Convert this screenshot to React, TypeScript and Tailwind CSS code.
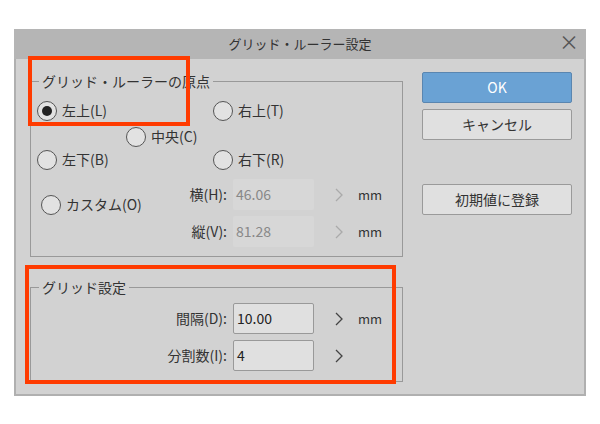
const F = { fontFamily: '"Noto Sans CJK JP","Noto Sans",sans-serif' };

function Radio({ on, label }: { on?: boolean; label: string }) {
  return (
    <div className="flex items-center gap-[5px]">
      <div className="w-[20px] h-[20px] rounded-full border border-[#555] bg-[#e2e2e2] flex items-center justify-center">
        {on && <div className="w-[10px] h-[10px] rounded-full bg-[#222]" />}
      </div>
      <span className="text-[14px] text-[#333]">{label}</span>
    </div>
  );
}

function Chev({ c }: { c: string }) {
  return (
    <svg width="10" height="16" viewBox="0 0 10 16" className="ml-[20px] mr-[14px]">
      <path d="M2 2 L8 8 L2 14" fill="none" stroke={c} strokeWidth="1.3" />
    </svg>
  );
}

function Row({ label, value, disabled, unit }: { label: string; value: string; disabled?: boolean; unit?: boolean }) {
  return (
    <div className="flex items-center h-[31px]">
      <span className="w-[197px] text-right pr-[6px] text-[14px] text-[#333]">{label}</span>
      <div className={`w-[81px] h-[31px] flex items-center px-[3px] text-[14px] rounded-[2px] ${disabled ? 'bg-[#d7d7d7] text-[#888]' : 'bg-[#e0e0e0] border border-[#999] text-[#222]'}`}>{value}</div>
      <Chev c={disabled ? '#aaa' : '#444'} />
      {unit && <span className="text-[13px] text-[#333]">mm</span>}
    </div>
  );
}

export default function App() {
  return (
    <div className="w-[600px] h-[424px] bg-white relative" style={F}>
      <div className="absolute left-[14px] top-[29px] w-[572px] h-[367px] flex flex-col">
        <div className="h-[30px] bg-[#b5b5b5] flex items-center justify-center relative text-[13px] text-[#333]">
          グリッド・ルーラー設定
          <span className="absolute right-[7px] top-[3px] text-[20px] text-[#555] leading-none">×</span>
        </div>
        <div className="flex-1 bg-[#d2d2d2] border-x-2 border-b-2 border-[#b0b0b0] flex pl-[14px] pt-[12px]">
          <div className="w-[373px] flex flex-col">
            <fieldset className="border border-[#999] h-[186px] pl-[6px] relative">
              <legend className="text-[14px] text-[#333] px-[3px] ml-[2px]">グリッド・ルーラーの原点</legend>
              <div className="flex mt-[8px]"><div className="w-[176px]"><Radio on label="左上(L)" /></div><Radio label="右上(T)" /></div>
              <div className="ml-[89px] h-[6px]"><div className="relative top-[5px]"><Radio label="中央(C)" /></div></div>
              <div className="flex mt-[22px]"><div className="w-[176px]"><Radio label="左下(B)" /></div><Radio label="右下(R)" /></div>
              <div className="absolute left-[10px] top-[102px]"><Radio label="カスタム(O)" /></div>
              <div className="mt-[9px] ml-[-1px] flex flex-col gap-[6px]">
                <Row label="横(H):" value="46.06" disabled unit />
                <Row label="縦(V):" value="81.28" disabled unit />
              </div>
            </fieldset>
            <fieldset className="border border-[#999] h-[105px] mt-[20px] pl-[6px]">
              <legend className="text-[14px] text-[#333] px-[3px] ml-[2px]">グリッド設定</legend>
              <div className="mt-[5px] ml-[-1px] flex flex-col gap-[6px]">
                <Row label="間隔(D):" value="10.00" unit />
                <Row label="分割数(I):" value="4" />
              </div>
            </fieldset>
          </div>
          <div className="ml-[19px] mt-[1px] w-[150px] flex flex-col text-[14px]">
            <div className="h-[31px] rounded-[2px] bg-[#6aa2d4] border border-[#5a86b0] text-white flex items-center justify-center">OK</div>
            <div className="h-[31px] mt-[6px] rounded-[2px] bg-[#e0e0e0] border border-[#9a9a9a] text-[#333] flex items-center justify-center">キャンセル</div>
            <div className="h-[31px] mt-[44px] rounded-[2px] bg-[#e0e0e0] border border-[#9a9a9a] text-[#333] flex items-center justify-center">初期値に登録</div>
          </div>
        </div>
      </div>
      <div className="absolute left-[28px] top-[56px] w-[162px] h-[70px] border-[4px] border-[#ff3b00]" />
      <div className="absolute left-[25px] top-[265px] w-[371px] h-[119px] border-[4px] border-[#ff3b00]" />
    </div>
  );
}
